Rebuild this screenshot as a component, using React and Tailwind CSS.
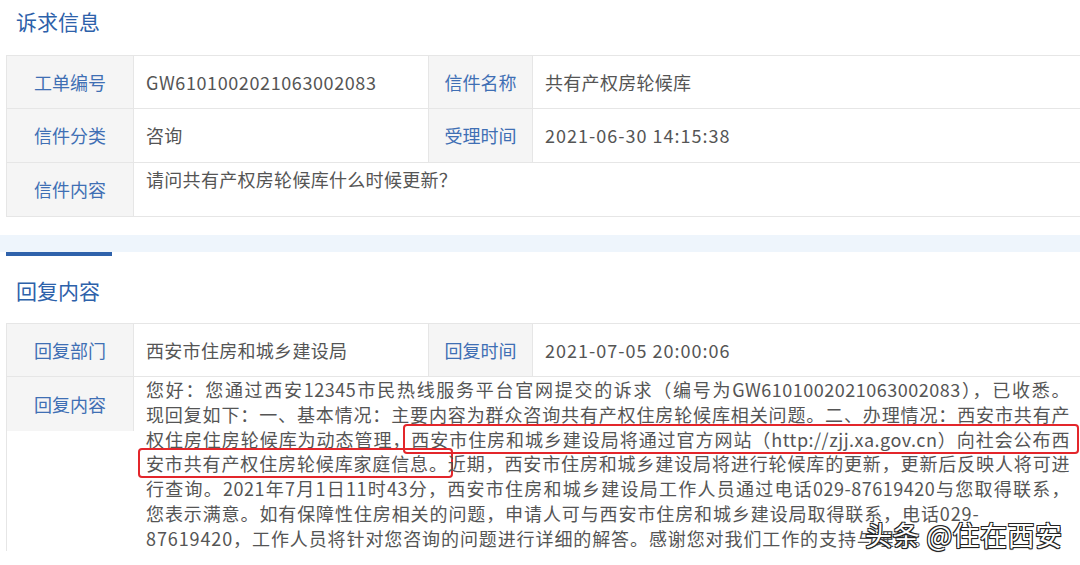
const font = { fontFamily: '"Noto Sans CJK SC", "Noto Sans", sans-serif' }

// lines wrapped as in the screenshot; the first five run to the right edge
const replyLines = [
  ['您好：您通过西安12345市民热线服务平台官网提交的诉求（编号为GW6101002021063002083），已收悉。'],
  ['现回复如下：一、基本情况：主要内容为群众咨询共有产权住房轮候库相关问题。二、办理情况：西安市共有产'],
  ['权住房住房轮候库为动态管理，', 'mark1', '西安市住房和城乡建设局将通过官方网站（http://zjj.xa.gov.cn）向社会公布西'],
  ['mark2', '安市共有产权住房轮候库家庭信息。', '近期，西安市住房和城乡建设局将进行轮候库的更新，更新后反映人将可进'],
  ['行查询。2021年7月1日11时43分，西安市住房和城乡建设局工作人员通过电话029-87619420与您取得联系，'],
  ['您表示满意。如有保障性住房相关的问题，申请人可与西安市住房和城乡建设局取得联系，电话029-'],
  ['87619420，工作人员将针对您咨询的问题进行详细的解答。感谢您对我们工作的支持与理解。'],
]

function Mark({ children, right = '-mr-[7px] pr-[7px]' }) {
  return (
    <span className={`-ml-[6px] pl-[6px] ${right} rounded-[2px] shadow-[0_0_0_2px_#e3262b]`}>
      {children}
    </span>
  )
}

function Line({ parts, full }) {
  const out = []
  for (let i = 0; i < parts.length; i++) {
    const p = parts[i]
    if (p === 'mark1') {
      out.push(<Mark key={i}>{parts[++i]}</Mark>)
    } else if (p === 'mark2') {
      out.push(<Mark key={i} right="-mr-[3px] pr-[3px]">{parts[++i]}</Mark>)
    } else {
      out.push(<span key={i}>{p}</span>)
    }
  }
  return (
    <div className={full ? 'w-[924px] whitespace-nowrap tracking-[0.5px] [text-align-last:justify]' : 'whitespace-nowrap tracking-[0.9px]'}>
      {out}
    </div>
  )
}

function Label({ children, className = '' }) {
  return (
    <div className={`flex items-center justify-center bg-[#f5f5f5] text-[18px] text-[#3f6fb4] ${className}`}>
      {children}
    </div>
  )
}

function Value({ children, className = '' }) {
  return (
    <div className={`flex items-center pl-[12px] text-[18px] tracking-[0.3px] text-[#555] ${className}`}>
      {children}
    </div>
  )
}

function SectionTitle({ children, className = '' }) {
  return (
    <div className={`flex items-center pl-[16px] text-[21px] text-[#2d61aa] ${className}`}>
      {children}
    </div>
  )
}

export default function App() {
  return (
    <div className="relative h-[565px] w-full overflow-hidden bg-white" style={font}>
      <SectionTitle className="h-[43px]">诉求信息</SectionTitle>

      <div className="ml-[6px] mt-[12px] border-l border-t border-[#e6e6e6]">
        <div className="grid h-[53px] grid-cols-[127px_295px_104px_1fr] border-b border-[#e6e6e6]">
          <Label className="border-r border-[#e6e6e6]">工单编号</Label>
          <Value className="border-r border-[#e6e6e6] tracking-[0.6px]">GW6101002021063002083</Value>
          <Label className="border-r border-[#e6e6e6]">信件名称</Label>
          <Value>共有产权房轮候库</Value>
        </div>
        <div className="grid h-[54px] grid-cols-[127px_295px_104px_1fr] border-b border-[#e6e6e6]">
          <Label className="border-r border-[#e6e6e6]">信件分类</Label>
          <Value className="border-r border-[#e6e6e6]">咨询</Value>
          <Label className="border-r border-[#e6e6e6]">受理时间</Label>
          <Value className="tracking-[1px]">2021-06-30 14:15:38</Value>
        </div>
        <div className="grid h-[54px] grid-cols-[127px_1fr] border-b border-[#e6e6e6]">
          <Label className="border-r border-[#e6e6e6]">信件内容</Label>
          <div className="pl-[12px] pt-[4px] text-[18px] leading-[24px] tracking-[0.3px] text-[#555]">
            请问共有产权房轮候库什么时候更新？
          </div>
        </div>
      </div>

      <div className="mt-[18px] h-[17px] bg-[#eef5fc]" />
      <div className="ml-[6px] h-[4px] w-[106px] bg-[#2f62ab]" />

      <SectionTitle className="h-[67px] pt-[2px]">回复内容</SectionTitle>

      <div className="ml-[6px] border-l border-t border-[#e6e6e6]">
        <div className="grid h-[53px] grid-cols-[127px_295px_104px_1fr] border-b border-[#e6e6e6]">
          <Label className="border-r border-[#e6e6e6]">回复部门</Label>
          <Value className="border-r border-[#e6e6e6]">西安市住房和城乡建设局</Value>
          <Label className="border-r border-[#e6e6e6]">回复时间</Label>
          <Value className="tracking-[1px]">2021-07-05 20:00:06</Value>
        </div>
        <div className="flex items-start">
          <Label className="h-[54px] w-[127px] shrink-0 border-r border-[#e6e6e6]">回复内容</Label>
          <div className="pl-[12px] text-[18px] leading-[24.8px] text-[#555]">
            {replyLines.map((parts, i) => (
              <Line key={i} parts={parts} full={i < 5} />
            ))}
          </div>
        </div>
      </div>

      <div className="absolute left-[865px] top-[517px] whitespace-nowrap text-[27px] leading-[36px] tracking-[0.5px] text-white [text-shadow:1px_1px_0_#222,-1px_-1px_0_#222,1px_-1px_0_#222,-1px_1px_0_#222,0_1px_1px_#000]">
        头条 @住在西安
      </div>
    </div>
  )
}
